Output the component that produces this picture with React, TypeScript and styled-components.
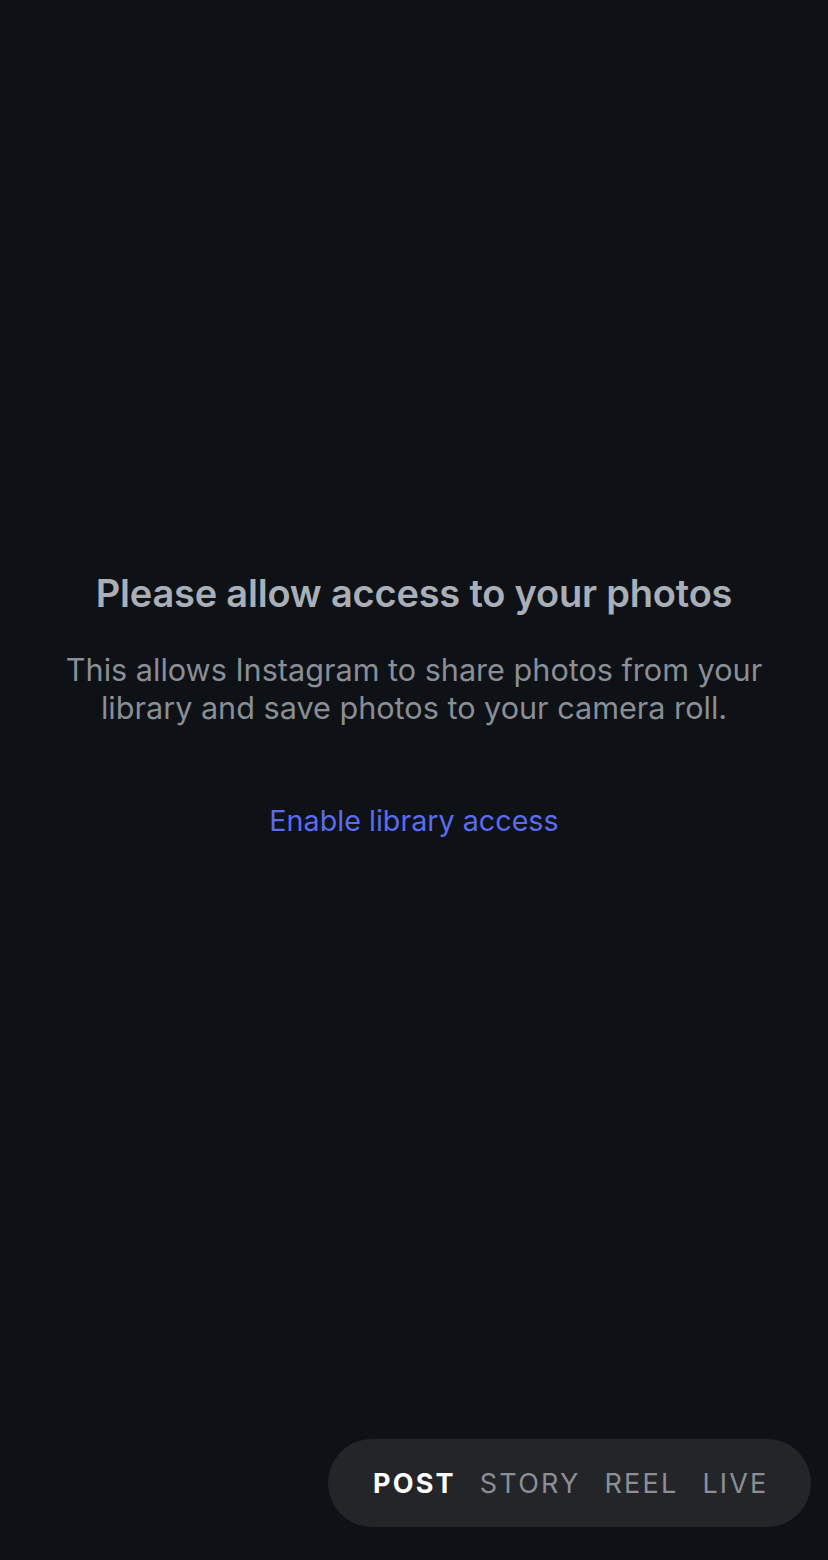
import styled, {createGlobalStyle} from "styled-components"

const GlobalStyle = createGlobalStyle`
    html, body {
        margin: 0;
        padding: 0;
        background: #0e1116;
    }
    * {
        box-sizing: border-box;
    }
`

const Screen = styled.div`
    width: 828px;
    height: 1560px;
    background: #0e1116;
    display: flex;
    flex-direction: column;
    font-family: Inter, "Noto Sans", sans-serif;
`

const Message = styled.div`
    padding-top: 569px;
    display: flex;
    flex-direction: column;
    align-items: center;
    text-align: center;
`

const Title = styled.h1`
    margin: 0;
    font-size: 38px;
    font-weight: 600;
    line-height: 48px;
    color: #a9aeb7;
    letter-spacing: -0.2px;
`

const Body = styled.p`
    margin: 34px 0 0;
    font-size: 30.6px;
    line-height: 38px;
    font-weight: 400;
    color: #8a8e95;
    max-width: 740px;
`

const EnableLink = styled.a`
    margin-top: 75px;
    font-size: 28.7px;
    line-height: 38px;
    color: #5a6cf0;
    text-decoration: none;
    cursor: pointer;
`

const ModeBar = styled.nav`
    margin-top: auto;
    margin-bottom: 33px;
    margin-right: 17px;
    align-self: flex-end;
    height: 88px;
    width: 483px;
    border-radius: 44px;
    background: #232529;
    display: flex;
    align-items: center;
    gap: 24px;
    padding-left: 45px;
`

const Mode = styled.span<{active?: boolean}>`
    font-size: 27px;
    letter-spacing: 2.2px;
    font-weight: ${(props) => (props.active ? 700 : 400)};
    color: ${(props) => (props.active ? "#ffffff" : "#8c8f94")};
`

const modes = ["POST", "STORY", "REEL", "LIVE"]

export default function App() {
    return (
        <>
            <GlobalStyle />
            <Screen>
                <Message>
                    <Title>Please allow access to your photos</Title>
                    <Body>
                        This allows Instagram to share photos from your
                        library and save photos to your camera roll.
                    </Body>
                    <EnableLink>Enable library access</EnableLink>
                </Message>
                <ModeBar>
                    {modes.map((m, i) => (
                        <Mode key={m} active={i === 0}>
                            {m}
                        </Mode>
                    ))}
                </ModeBar>
            </Screen>
        </>
    )
}
